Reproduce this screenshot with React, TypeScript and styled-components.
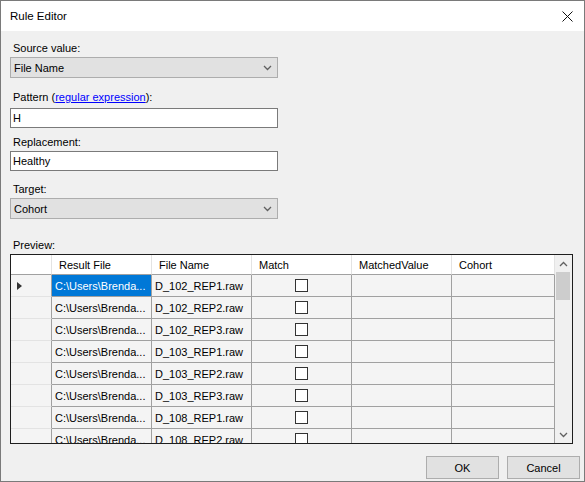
import React from "react";
import styled, { createGlobalStyle } from "styled-components";

const GlobalStyle = createGlobalStyle`
  html, body {
    margin: 0;
    padding: 0;
    background: #f0f0f0;
  }
  * {
    box-sizing: border-box;
  }
  body {
    font-family: "Liberation Sans", Arial, sans-serif;
    font-size: 11px;
    color: #000;
  }
`;

const files = [
  "D_102_REP1.raw",
  "D_102_REP2.raw",
  "D_102_REP3.raw",
  "D_103_REP1.raw",
  "D_103_REP2.raw",
  "D_103_REP3.raw",
  "D_108_REP1.raw",
  "D_108_REP2.raw",
];

const columns = ["Result File", "File Name", "Match", "MatchedValue", "Cohort"];

const Chevron = ({ up }: { up?: boolean }) => (
  <svg width="9" height="6" viewBox="0 0 9 6">
    <polyline
      points={up ? "1,5 4.5,1.5 8,5" : "1,1 4.5,4.5 8,1"}
      fill="none"
      stroke="#606060"
      strokeWidth="1.3"
    />
  </svg>
);

const CloseIcon = () => (
  <svg width="11" height="11" viewBox="0 0 11 11">
    <path d="M0.5 0.5 L10.5 10.5 M10.5 0.5 L0.5 10.5" stroke="#111" strokeWidth="1" />
  </svg>
);

export default function App() {
  return (
    <>
      <GlobalStyle />
      <Window>
        <TitleBar>
          <Title>Rule Editor</Title>
          <CloseIcon />
        </TitleBar>
        <Body>
          <Label $top={0}>Source value:</Label>
          <Combo>
            <span>File Name</span>
            <Chevron />
          </Combo>

          <Label $top={12} $bottom={4}>
            Pattern (<Link>regular expression</Link>):
          </Label>
          <TextBox>H</TextBox>

          <Label $top={7}>Replacement:</Label>
          <TextBox>Healthy</TextBox>

          <Label $top={11}>Target:</Label>
          <Combo>
            <span>Cohort</span>
            <Chevron />
          </Combo>

          <Label $top={19}>Preview:</Label>
          <GridBox>
            <Table>
              <HeaderCell />
              {columns.map((c) => (
                <HeaderCell key={c}>{c}</HeaderCell>
              ))}
              {files.map((f, i) => (
                <React.Fragment key={f}>
                  <RowHeader>{i === 0 && <Arrow />}</RowHeader>
                  <Cell $selected={i === 0}>{"C:\\Users\\Brenda..."}</Cell>
                  <Cell>{f}</Cell>
                  <Cell $center>
                    <CheckBox />
                  </Cell>
                  <Cell />
                  <Cell />
                </React.Fragment>
              ))}
            </Table>
            <ScrollBar>
              <ScrollArrow>
                <Chevron up />
              </ScrollArrow>
              <Track>
                <Thumb />
              </Track>
              <ScrollArrow>
                <Chevron />
              </ScrollArrow>
            </ScrollBar>
          </GridBox>

          <Footer>
            <Button>OK</Button>
            <Button>Cancel</Button>
          </Footer>
        </Body>
      </Window>
    </>
  );
}

const Window = styled.div`
  width: 585px;
  height: 482px;
  border: 1px solid #7a7a7a;
  background: #f0f0f0;
  display: flex;
  flex-direction: column;
  overflow: hidden;
`;

const TitleBar = styled.div`
  height: 30px;
  flex-shrink: 0;
  background: #fff;
  display: flex;
  align-items: center;
  justify-content: space-between;
  padding: 0 11px 0 9px;
`;

const Title = styled.div`
  font-size: 11.5px;
  color: #000;
`;

const Body = styled.div`
  flex: 1;
  display: flex;
  flex-direction: column;
  padding: 10px 0 0 9px;
`;

const Label = styled.div<{ $top: number; $bottom?: number }>`
  height: 14px;
  line-height: 14px;
  padding-left: 3px;
  margin-top: ${(p) => p.$top}px;
  margin-bottom: ${(p) => p.$bottom ?? 2}px;
`;

const Link = styled.span`
  color: #0000ff;
  text-decoration: underline;
`;

const Combo = styled.div`
  width: 268px;
  height: 21px;
  border: 1px solid #adadad;
  background: #e1e1e1;
  display: flex;
  align-items: center;
  justify-content: space-between;
  padding: 0 5px 0 3px;
`;

const TextBox = styled.div`
  width: 268px;
  height: 20px;
  border: 1px solid #7a7a7a;
  background: #fff;
  display: flex;
  align-items: center;
  padding-left: 2px;
`;

const GridBox = styled.div`
  width: 563px;
  height: 190px;
  border: 1px solid #1e1e1e;
  display: flex;
  background: #f4f4f4;
`;

const Table = styled.div`
  flex: 1;
  overflow: hidden;
  display: grid;
  grid-template-columns: 41px 100px 100px 100px 100px 1fr;
  grid-template-rows: 20px;
  grid-auto-rows: 22px;
  align-content: start;
`;

const HeaderCell = styled.div`
  background: #fff;
  border-right: 1px solid #e3e3e3;
  border-bottom: 1px solid #a0a0a0;
  display: flex;
  align-items: center;
  padding-left: 7px;
  white-space: nowrap;
`;

const RowHeader = styled.div`
  background: #f4f4f4;
  border-right: 1px solid #a0a0a0;
  border-bottom: 1px solid #e3e3e3;
  display: flex;
  align-items: center;
  padding-left: 6px;
`;

const Arrow = styled.div`
  width: 0;
  height: 0;
  border-left: 5px solid #333;
  border-top: 4.5px solid transparent;
  border-bottom: 4.5px solid transparent;
`;

const Cell = styled.div<{ $selected?: boolean; $center?: boolean }>`
  background: ${(p) => (p.$selected ? "#0078d7" : "#f4f4f4")};
  color: ${(p) => (p.$selected ? "#fff" : "#000")};
  border-right: 1px solid #a0a0a0;
  border-bottom: 1px solid #a0a0a0;
  display: flex;
  align-items: center;
  justify-content: ${(p) => (p.$center ? "center" : "flex-start")};
  padding-left: ${(p) => (p.$center ? 0 : 3)}px;
  white-space: nowrap;
  overflow: hidden;
`;

const CheckBox = styled.div`
  width: 13px;
  height: 13px;
  border: 1px solid #333;
  background: #fff;
`;

const ScrollBar = styled.div`
  width: 17px;
  flex-shrink: 0;
  background: #f0f0f0;
  display: flex;
  flex-direction: column;
`;

const ScrollArrow = styled.div`
  height: 17px;
  display: flex;
  align-items: center;
  justify-content: center;
`;

const Track = styled.div`
  flex: 1;
  padding: 0 2px 0 1px;
`;

const Thumb = styled.div`
  height: 28px;
  background: #cdcdcd;
`;

const Footer = styled.div`
  display: flex;
  justify-content: flex-end;
  gap: 8px;
  margin-top: 12px;
  padding-right: 4px;
`;

const Button = styled.div`
  width: 73px;
  height: 23px;
  border: 1px solid #adadad;
  background: #e1e1e1;
  display: flex;
  align-items: center;
  justify-content: center;
`;
